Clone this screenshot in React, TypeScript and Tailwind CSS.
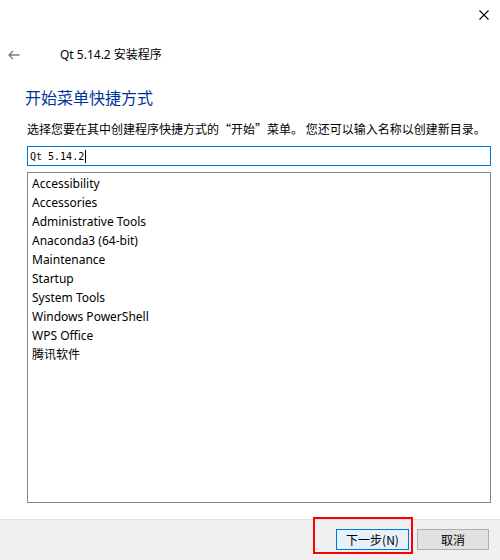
const items = [
  'Accessibility',
  'Accessories',
  'Administrative Tools',
  'Anaconda3 (64-bit)',
  'Maintenance',
  'Startup',
  'System Tools',
  'Windows PowerShell',
  'WPS Office',
  '腾讯软件',
];

const uiFont = "font-['Noto_Sans','Noto_Sans_CJK_SC',sans-serif]";

export default function App() {
  return (
    <div className={`relative flex h-[560px] w-[500px] flex-col bg-white text-black ${uiFont}`}>
      {/* close */}
      <div className="flex h-[30px] justify-end pr-[11px] pt-[10px]">
        <svg width="10" height="10" viewBox="0 0 10 10">
          <path d="M0.5 0.5 L9.5 9.5 M9.5 0.5 L0.5 9.5" stroke="#000" strokeWidth="1.1" fill="none" />
        </svg>
      </div>

      {/* title bar */}
      <div className="flex h-[47px] items-start pt-[18px]">
        <svg className="ml-[8px] mt-[2px]" width="12" height="10" viewBox="0 0 12 10">
          <path d="M11.5 5 H1 M5 1 L1 5 L5 9" stroke="#7a7a7a" strokeWidth="1.3" fill="none" />
        </svg>
        <span className="ml-[40px] text-[12px] leading-[14px]">Qt 5.14.2 安装程序</span>
      </div>

      {/* heading */}
      <h1 className="ml-[25px] mt-[9px] text-[16px] leading-[22px] text-[#003399] font-['Noto_Sans_CJK_SC',sans-serif]">
        开始菜单快捷方式
      </h1>

      <p className="ml-[27px] mt-[13px] text-[12px] leading-[16px] font-['Noto_Sans_CJK_SC',sans-serif]">
        选择您要在其中创建程序快捷方式的“开始”菜单。 您还可以输入名称以创建新目录。
      </p>

      <div className="ml-[27px] mr-[9px] mt-[9px] flex h-[20px] items-center border border-[#0078d7] pl-[2px] font-['DejaVu_Sans_Mono','Liberation_Mono',monospace] text-[10px]">
        <span>Qt 5.14.2</span>
        <span className="ml-[1px] h-[13px] w-[1px] bg-black" />
      </div>

      <div className="ml-[27px] mr-[9px] mt-[6px] h-[331px] border border-[#828790] pt-[1px] pl-[4px]">
        {items.map((item) => (
          <div key={item} className="text-[12px] leading-[19px]">
            {item}
          </div>
        ))}
      </div>

      <div className="flex-1" />

      {/* footer */}
      <div className="flex h-[41px] items-start justify-end gap-[8px] border-t border-[#dfdfdf] bg-[#f0f0f0] pr-[11px] pt-[9px] font-['Noto_Sans_CJK_SC',sans-serif]">
        <button className="flex h-[21px] w-[73px] items-center justify-center border border-[#0078d7] bg-[#e5f1fb] text-[12px]">
          下一步(N)
        </button>
        <button className="flex h-[21px] w-[72px] items-center justify-center border border-[#adadad] bg-[#e1e1e1] text-[12px]">
          取消
        </button>
      </div>

      {/* red annotation */}
      <div className="pointer-events-none absolute left-[313px] top-[517px] h-[37px] w-[100px] border-2 border-[#ff0000]" />
    </div>
  );
}
